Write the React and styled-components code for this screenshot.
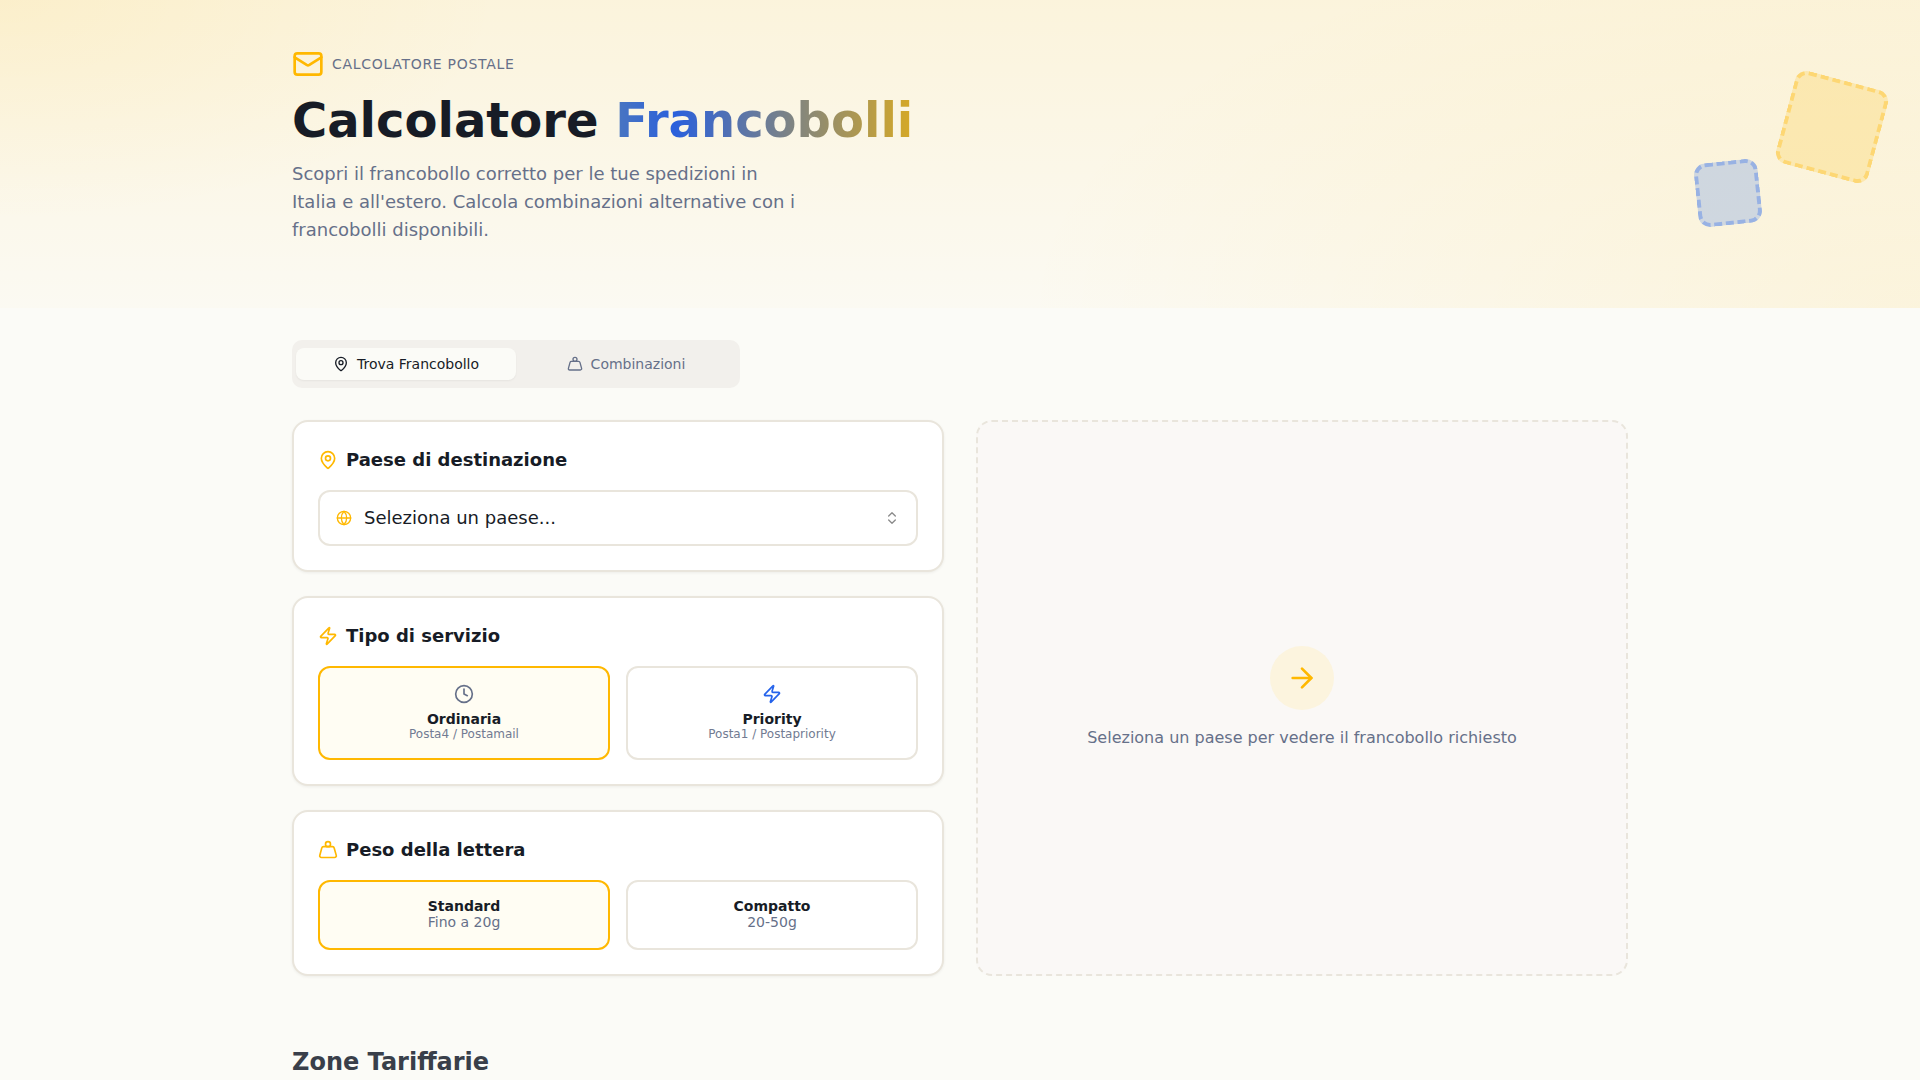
import React from 'react'
import styled, { createGlobalStyle } from 'styled-components'
import { Mail, MapPin, Globe, ChevronsUpDown, Zap, Clock, Weight, ArrowRight } from 'lucide-react'

const amber = '#ffb800'
const blue = '#2563eb'
const ink = '#171c26'
const muted = '#667089'
const line = '#e9e5dc'

const GlobalStyle = createGlobalStyle`
html, body {
    margin:0;
    padding:0;
    background:#fbfbf7;
    font-family:"DejaVu Sans", sans-serif;
    color:${ink};
}
* {
    box-sizing:border-box;
}
`

function OptionCard({ active, icon, title, subtitle, compact }) {
    return (
        <Option $active={active} $compact={compact}>
            {icon}
            <OptionTitle>{title}</OptionTitle>
            <OptionSub $compact={compact}>{subtitle}</OptionSub>
        </Option>
    )
}

export default function App() {
    return (
        <Page>
            <GlobalStyle />
            <Hero>
                <Wrap>
                    <Eyebrow>
                        <Mail size={32} color={amber} strokeWidth={2} />
                        <span>Calcolatore Postale</span>
                    </Eyebrow>
                    <Title>Calcolatore <Gradient>Francobolli</Gradient></Title>
                    <Lead>
                        Scopri il francobollo corretto per le tue spedizioni in Italia e all'estero. Calcola combinazioni alternative con i francobolli disponibili.
                    </Lead>
                </Wrap>
                <BigStamp />
                <SmallStamp />
            </Hero>
            <Wrap>
                <Tabs>
                    <Tab $active>
                        <MapPin size={16} />
                        Trova Francobollo
                    </Tab>
                    <Tab>
                        <Weight size={16} />
                        Combinazioni
                    </Tab>
                </Tabs>
                <Columns>
                    <Stack>
                        <Card>
                            <CardTitle>
                                <MapPin size={20} color={amber} />
                                Paese di destinazione
                            </CardTitle>
                            <Select>
                                <Globe size={16} color={amber} />
                                <SelectText>Seleziona un paese...</SelectText>
                                <ChevronsUpDown size={16} color="#8b8b8b" />
                            </Select>
                        </Card>
                        <Card>
                            <CardTitle>
                                <Zap size={20} color={amber} />
                                Tipo di servizio
                            </CardTitle>
                            <OptionGrid>
                                <OptionCard
                                    active
                                    icon={<Clock size={20} color={muted} />}
                                    title="Ordinaria"
                                    subtitle="Posta4 / Postamail"
                                />
                                <OptionCard
                                    icon={<Zap size={20} color={blue} />}
                                    title="Priority"
                                    subtitle="Posta1 / Postapriority"
                                />
                            </OptionGrid>
                        </Card>
                        <Card>
                            <CardTitle>
                                <Weight size={20} color={amber} />
                                Peso della lettera
                            </CardTitle>
                            <OptionGrid>
                                <OptionCard compact active title="Standard" subtitle="Fino a 20g" />
                                <OptionCard compact title="Compatto" subtitle="20-50g" />
                            </OptionGrid>
                        </Card>
                    </Stack>
                    <Empty>
                        <ArrowCircle>
                            <ArrowRight size={32} color={amber} />
                        </ArrowCircle>
                        <EmptyText>Seleziona un paese per vedere il francobollo richiesto</EmptyText>
                    </Empty>
                </Columns>
                <SectionTitle>Zone Tariffarie</SectionTitle>
            </Wrap>
        </Page>
    )
}

const Page = styled.div`
height:100vh;
overflow:hidden;
`
const Wrap = styled.div`
max-width:1400px;
margin:0 auto;
padding:0 32px;
`
const Hero = styled.header`
position:relative;
height:308px;
padding-top:48px;
overflow:hidden;
background:
    radial-gradient(ellipse 500px 220px at 0% 0%, rgba(255,184,0,0.08), rgba(255,184,0,0) 100%),
    radial-gradient(ellipse 900px 400px at 100% 100%, rgba(255,184,0,0.09), rgba(255,184,0,0) 100%),
    linear-gradient(180deg, rgba(255,184,0,0.11) 0%, rgba(255,184,0,0.02) 100%);
`
const Eyebrow = styled.div`
display:flex;
align-items:center;
gap:8px;
height:32px;
font-size:14px;
letter-spacing:0.7px;
text-transform:uppercase;
color:${muted};
`
const Title = styled.h1`
margin:16px 0 0;
font-size:48px;
line-height:48px;
font-weight:700;
color:${ink};
`
const Gradient = styled.span`
background:linear-gradient(90deg, #4a76c0 0%, #2a60dc 20%, #d6a926 100%);
-webkit-background-clip:text;
background-clip:text;
color:transparent;
`
const Lead = styled.p`
margin:16px 0 0;
max-width:512px;
font-size:18px;
line-height:28px;
color:${muted};
`
const BigStamp = styled.div`
position:absolute;
top:79px;
right:40px;
width:96px;
height:96px;
border:4px dashed rgba(255,184,0,0.35);
border-radius:12px;
background:rgba(255,184,0,0.19);
transform:rotate(15deg);
`
const SmallStamp = styled.div`
position:absolute;
top:161px;
right:160px;
width:64px;
height:64px;
border:4px dashed rgba(37,99,235,0.32);
border-radius:12px;
background:rgba(37,99,235,0.2);
transform:rotate(-6deg);
`
const Tabs = styled.div`
display:grid;
grid-template-columns:1fr 1fr;
width:448px;
height:48px;
margin-top:32px;
padding:8px 4px;
border-radius:10px;
background:#f2f0ec;
`
const Tab = styled.div`
display:flex;
align-items:center;
justify-content:center;
gap:8px;
border-radius:8px;
font-size:14px;
color:${p => (p.$active ? ink : muted)};
background:${p => (p.$active ? '#fbfbf7' : 'transparent')};
box-shadow:${p => (p.$active ? '0 1px 2px rgba(0,0,0,0.05)' : 'none')};
`
const Columns = styled.div`
display:grid;
grid-template-columns:1fr 1fr;
gap:32px;
margin-top:32px;
`
const Stack = styled.div`
display:flex;
flex-direction:column;
gap:24px;
`
const Card = styled.section`
padding:24px;
border:2px solid ${line};
border-radius:16px;
background:#fff;
box-shadow:0 1px 3px rgba(0,0,0,0.06);
`
const CardTitle = styled.h3`
display:flex;
align-items:center;
gap:8px;
margin:0 0 16px;
font-size:18px;
line-height:28px;
font-weight:700;
color:${ink};
`
const Select = styled.div`
display:flex;
align-items:center;
gap:12px;
height:56px;
padding:0 16px 1px;
border:2px solid ${line};
border-radius:12px;
background:#fff;
`
const SelectText = styled.span`
flex:1;
font-size:18px;
color:${ink};
`
const OptionGrid = styled.div`
display:grid;
grid-template-columns:1fr 1fr;
gap:16px;
`
const Option = styled.div`
display:flex;
flex-direction:column;
align-items:center;
justify-content:center;
height:${p => (p.$compact ? '70px' : '94px')};
padding-bottom:${p => (p.$compact ? '2px' : '1px')};
border:2px solid ${p => (p.$active ? amber : line)};
border-radius:12px;
background:${p => (p.$active ? '#fffdf3' : '#fff')};
svg {
    margin-bottom:7px;
}
`
const OptionTitle = styled.div`
font-size:14px;
line-height:16px;
font-weight:700;
color:${ink};
`
const OptionSub = styled.div`
font-size:${p => (p.$compact ? '14px' : '12px')};
line-height:${p => (p.$compact ? '17px' : '14px')};
color:${p => (p.$compact ? muted : '#727b92')};
`
const Empty = styled.div`
display:flex;
flex-direction:column;
align-items:center;
justify-content:center;
gap:16px;
border:2px dashed ${line};
border-radius:16px;
background:#faf8f6;
`
const ArrowCircle = styled.div`
display:flex;
align-items:center;
justify-content:center;
width:64px;
height:64px;
border-radius:50%;
background:#fcf4de;
`
const EmptyText = styled.p`
margin:0;
font-size:16px;
line-height:24px;
color:${muted};
`
const SectionTitle = styled.h2`
margin:70px 0 0;
font-size:24px;
line-height:32px;
font-weight:700;
color:#393f4a;
`
